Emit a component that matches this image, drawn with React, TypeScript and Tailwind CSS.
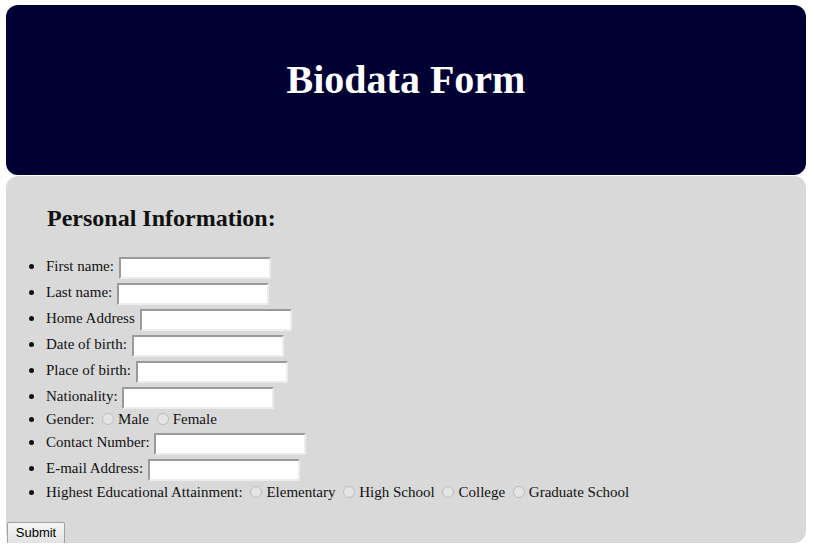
const fields1 = ["First name:", "Last name:", "Home Address", "Date of birth:", "Place of birth:", "Nationality:"]
const fields2 = ["Contact Number:", "E-mail Address:"]
const levels = ["Elementary", "High School", "College", "Graduate School"]

function TextBox() {
  return (
    <input
      type="text"
      className="ml-[1px] inline-block h-[22px] w-[152px] border-2 border-t-[#9a9a9a] border-l-[#9a9a9a] border-r-[#ececec] border-b-[#ececec] bg-white align-middle outline-none"
    />
  )
}

function Radio({ name }: { name: string }) {
  return (
    <input
      type="radio"
      name={name}
      className="mx-[4px] inline-block h-[12px] w-[12px] appearance-none rounded-full border border-[#bdbdbd] bg-[#e4e4e4] align-[-1px]"
    />
  )
}

export default function App() {
  return (
    <div className="px-[6px] pt-[5px] text-[#111]" style={{ fontFamily: '"Liberation Serif", "Times New Roman", serif' }}>
      <div className="flex h-[170px] w-[800px] justify-center rounded-[12px] bg-[#000033] pt-[49px]">
        <h1 className="text-[40px] font-bold leading-[52px] text-white">Biodata Form</h1>
      </div>
      <form className="mt-[1px] flex h-[367px] w-[800px] flex-col rounded-[12px] bg-[#d9d9d9] pt-[29px]">
        <h2 className="ml-[41px] text-[24px] font-bold leading-[26px]">Personal Information:</h2>
        <ul className="mt-[21px] list-disc pl-[40px] text-[15px] marker:text-[18px]">
          {fields1.map((f) => (
            <li key={f} className="h-[26px] leading-[26px]">
              {f} <TextBox />
            </li>
          ))}
          <li className="h-[20px] leading-[20px]">
            Gender: <Radio name="g" />Male <Radio name="g" />Female
          </li>
          {fields2.map((f) => (
            <li key={f} className="h-[26px] leading-[26px]">
              {f} <TextBox />
            </li>
          ))}
          <li className="h-[22px] leading-[22px]">
            Highest Educational Attainment:{" "}
            {levels.map((l) => (
              <span key={l}>
                <Radio name="e" />
                {l}{" "}
              </span>
            ))}
          </li>
        </ul>
        <div className="mt-[18px] pl-[1px]">
          <button
            type="button"
            className="h-[22px] w-[58px] rounded-[2px] border border-[#a0a0a0] bg-gradient-to-b from-[#f6f6f6] to-[#e2e2e2] text-[13px] text-black"
            style={{ fontFamily: '"Liberation Sans", Arial, sans-serif' }}
          >
            Submit
          </button>
        </div>
      </form>
    </div>
  )
}
